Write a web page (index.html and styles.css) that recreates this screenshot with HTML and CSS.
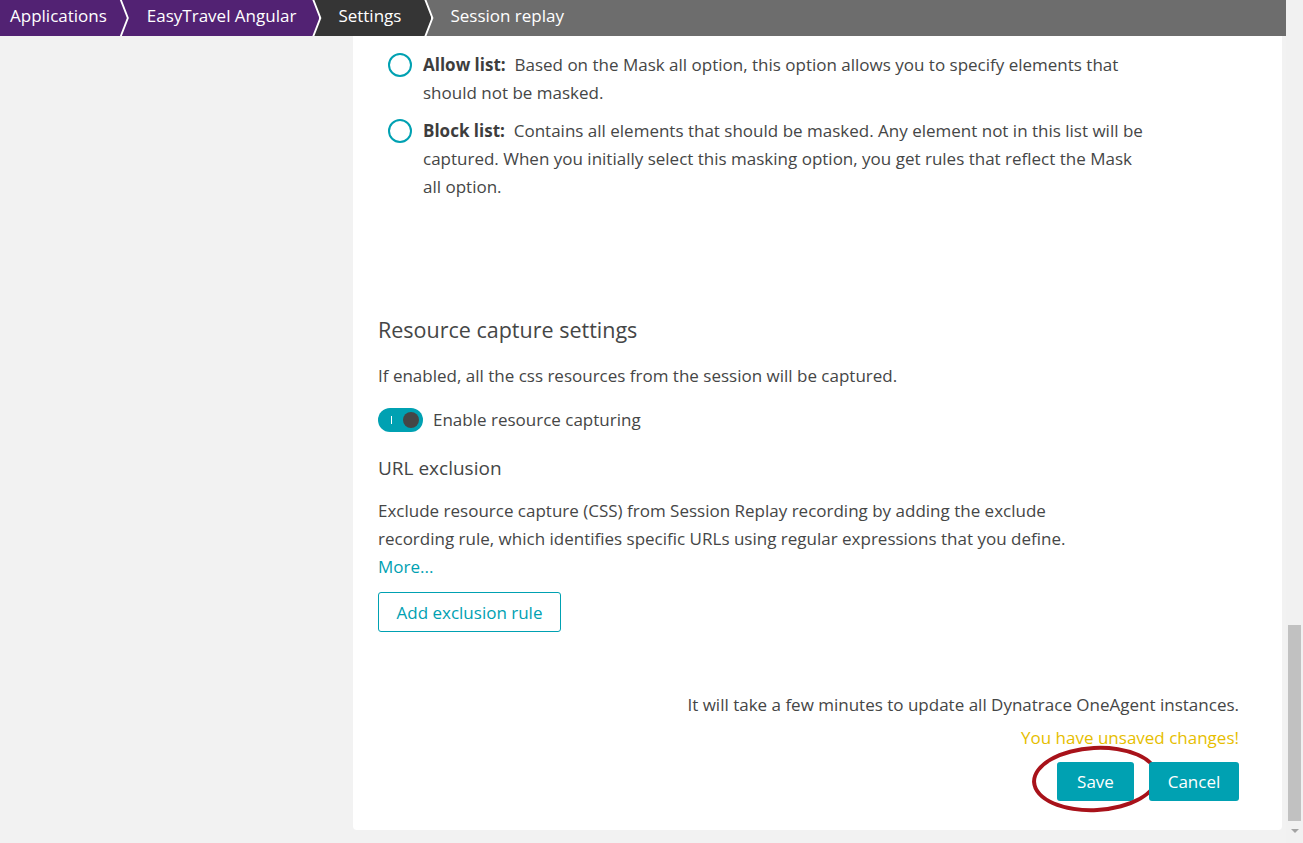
FILE: index.html
```html
<!DOCTYPE html>
<html lang="en">
<head>
<meta charset="utf-8">
<title>Session replay</title>
<link rel="stylesheet" href="styles.css">
</head>
<body>
<div class="app">
  <div class="main">
    <nav class="crumbs">
      <a class="crumb crumb-first crumb-purple">Applications</a>
      <a class="crumb crumb-purple">EasyTravel Angular</a>
      <a class="crumb crumb-dark">Settings</a>
      <span class="crumb crumb-last crumb-gray">Session replay</span>
    </nav>
    <div class="content">
      <aside class="side"></aside>
      <section class="card">
        <div class="radio-list">
          <label class="radio-row">
            <span class="radio"></span>
            <span class="radio-text"><b>Allow list:</b>&nbsp; Based on the Mask all option, this option allows you to specify elements that should not be masked.</span>
          </label>
          <label class="radio-row">
            <span class="radio"></span>
            <span class="radio-text"><b>Block list:</b>&nbsp; Contains all elements that should be masked. Any element not in this list will be captured. When you initially select this masking option, you get rules that reflect the Mask all option.</span>
          </label>
        </div>

        <h2 class="section-title">Resource capture settings</h2>
        <p class="text">If enabled, all the css resources from the session will be captured.</p>
        <label class="toggle-row">
          <span class="toggle"><span class="toggle-mark"></span><span class="toggle-knob"></span></span>
          <span>Enable resource capturing</span>
        </label>

        <h3 class="sub-title">URL exclusion</h3>
        <p class="text text-wrap">Exclude resource capture (CSS) from Session Replay recording by adding the exclude recording rule, which identifies specific URLs using regular expressions that you define.</p>
        <a class="more">More...</a>
        <button class="btn-outline">Add exclusion rule</button>

        <div class="footer">
          <p class="text">It will take a few minutes to update all Dynatrace OneAgent instances.</p>
          <p class="unsaved">You have unsaved changes!</p>
          <div class="actions">
            <button class="btn btn-save">Save</button>
            <button class="btn btn-cancel">Cancel</button>
          </div>
        </div>
      </section>
    </div>
  </div>
  <div class="scrollbar">
    <div class="scroll-track"><div class="scroll-thumb"></div></div>
    <div class="scroll-arrow"></div>
  </div>
</div>
</body>
</html>
```
FILE: styles.css
```css
* { box-sizing: border-box; }
html, body { margin: 0; padding: 0; height: 100%; overflow: hidden; }
body {
  font-family: "Open Sans", "Noto Sans", sans-serif;
  font-size: 17px;
  color: #454646;
  background: #f2f2f2;
}
.app {
  display: grid;
  grid-template-columns: 1fr 17px;
  height: 843px;
}
.main {
  display: flex;
  flex-direction: column;
  min-width: 0;
}
.crumbs {
  display: flex;
  height: 36px;
  background: #fff;
  flex-shrink: 0;
}
.crumb {
  display: flex;
  align-items: center;
  color: #fff;
  font-size: 17px;
  height: 36px;
  padding: 0 23px 5px 25px;
  margin-left: -5px;
  clip-path: polygon(0 0, calc(100% - 7px) 0, 100% 50%, calc(100% - 7px) 100%, 0 100%, 7px 50%);
  white-space: nowrap;
}
.crumb-first {
  margin-left: 0;
  padding-left: 10px;
  padding-right: 20px;
  clip-path: polygon(0 0, calc(100% - 7px) 0, 100% 50%, calc(100% - 7px) 100%, 0 100%);
}
.crumb-dark { padding-right: 30px; padding-left: 24px; }
.crumb-last {
  flex: 1;
  padding-left: 24px;
  clip-path: polygon(0 0, 100% 0, 100% 100%, 0 100%, 7px 50%);
}
.crumb-purple { background: #522273; }
.crumb-dark { background: #353535; }
.crumb-gray { background: #6d6d6d; }

.content {
  flex: 1;
  display: flex;
  padding-right: 4px;
  padding-bottom: 13px;
}
.side { width: 353px; flex-shrink: 0; }
.card {
  flex: 1;
  background: #fff;
  border-radius: 0 0 4px 4px;
  padding: 15px 43px 0 25px;
  display: flex;
  flex-direction: column;
  align-items: flex-start;
}
.radio-list {
  display: flex;
  flex-direction: column;
  gap: 10px;
  padding-left: 10px;
}
.radio-row {
  display: flex;
  gap: 11px;
  line-height: 28px;
}
.radio {
  width: 24px;
  height: 24px;
  border: 2px solid #00a1b2;
  border-radius: 50%;
  margin-top: 2px;
  flex-shrink: 0;
}
.radio-text { max-width: 725px; }
.radio-text b { font-weight: 700; color: #3d3d3d; }

.section-title {
  font-size: 21.5px;
  font-weight: 400;
  margin: 115px 0 0;
  line-height: 28px;
}
.text { margin: 18px 0 0; line-height: 28px; }
.toggle-row {
  display: flex;
  align-items: center;
  gap: 10px;
  margin-top: 16px;
  line-height: 28px;
}
.toggle {
  position: relative;
  width: 45px;
  height: 24px;
  border-radius: 12px;
  background: #00a1b2;
  display: flex;
  align-items: center;
  justify-content: space-between;
  padding: 0 4px 0 13px;
}
.toggle-mark { width: 1px; height: 8px; background: #fff; }
.toggle-knob { width: 16px; height: 16px; border-radius: 50%; background: #454646; }

.sub-title {
  font-size: 19px;
  font-weight: 400;
  margin: 20px 0 0;
  line-height: 28px;
}
.text-wrap { max-width: 700px; margin-top: 15px; }
.more { color: #00a1b2; line-height: 28px; cursor: pointer; }
.btn-outline {
  margin-top: 11px;
  height: 40px;
  width: 183px;
  padding: 0;
  border: 1px solid #00a1b2;
  border-radius: 3px;
  background: #fff;
  color: #00a1b2;
  font: inherit;
  font-size: 17px;
}
.footer {
  align-self: stretch;
  display: flex;
  flex-direction: column;
  align-items: flex-end;
  margin-top: 59px;
}
.footer .text { margin: 0; }
.unsaved { margin: 5px 0 0; color: #e6be00; line-height: 28px; }
.actions {
  display: flex;
  gap: 15px;
  margin-top: 10px;
}
.btn {
  position: relative;
  height: 39px;
  padding: 0;
  border: none;
  border-radius: 3px;
  background: #00a1b2;
  color: #fff;
  font: inherit;
  font-size: 17px;
}
.btn-save { width: 77px; }
.btn-cancel { width: 90px; }
.btn-save::after {
  content: "";
  position: absolute;
  left: -25px;
  top: -16px;
  width: 127px;
  height: 66px;
  border: 4px solid #a8121a;
  border-radius: 50%;
  box-sizing: border-box;
  transform: rotate(-3deg);
}

.scrollbar {
  background: #f1f1f1;
  display: flex;
  flex-direction: column;
  padding: 0 2px;
}
.scroll-track { flex: 1; display: flex; flex-direction: column; justify-content: flex-end; }
.scroll-thumb { height: 196px; background: #c1c1c1; margin-bottom: 2px; }
.scroll-arrow {
  height: 20px;
  display: flex;
  justify-content: center;
  padding-top: 6px;
}
.scroll-arrow::before {
  content: "";
  width: 0; height: 0;
  border-left: 4px solid transparent;
  border-right: 4px solid transparent;
  border-top: 4px solid #a3a3a3;
}
```
